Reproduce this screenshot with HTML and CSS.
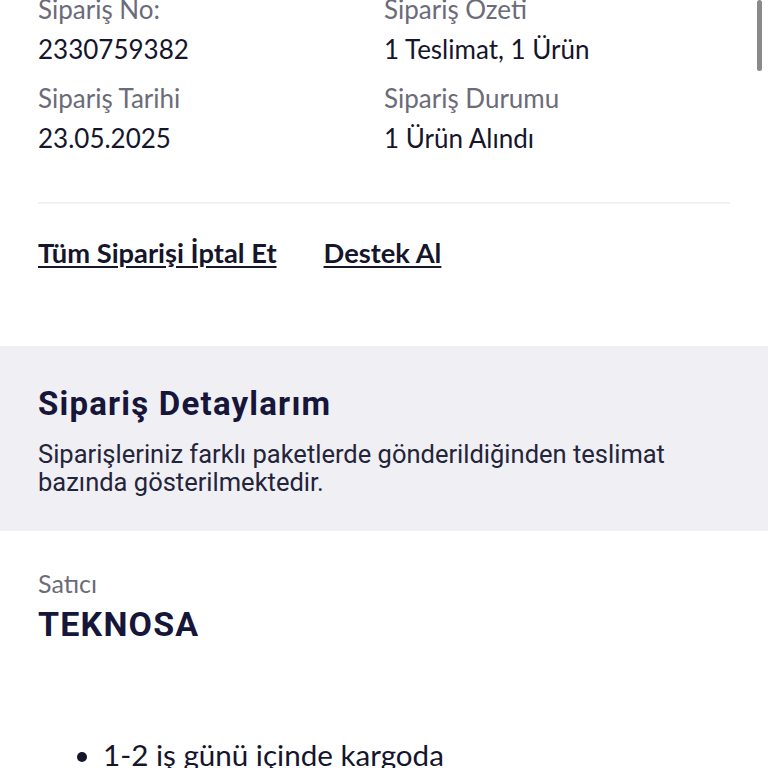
FILE: index.html
```html
<!DOCTYPE html>
<html lang="tr">
<head>
<meta charset="utf-8">
<link rel="stylesheet" href="styles.css">
</head>
<body>
<div class="page">
  <section class="info">
    <div class="field">
      <div class="label">Sipariş No:</div>
      <div class="value">2330759382</div>
    </div>
    <div class="field">
      <div class="label">Sipariş Özeti</div>
      <div class="value">1 Teslimat, 1 Ürün</div>
    </div>
    <div class="field">
      <div class="label">Sipariş Tarihi</div>
      <div class="value">23.05.2025</div>
    </div>
    <div class="field">
      <div class="label">Sipariş Durumu</div>
      <div class="value">1 Ürün Alındı</div>
    </div>
  </section>
  <hr class="divider">
  <nav class="actions">
    <a class="action" href="#">Tüm Siparişi İptal Et</a>
    <a class="action" href="#">Destek Al</a>
  </nav>
  <section class="details">
    <h2 class="details-title">Sipariş Detaylarım</h2>
    <p class="details-text">Siparişleriniz farklı paketlerde gönderildiğinden teslimat bazında gösterilmektedir.</p>
  </section>
  <section class="seller">
    <div class="seller-label">Satıcı</div>
    <div class="seller-name">TEKNOSA</div>
    <ul class="notes">
      <li>1-2 iş günü içinde kargoda</li>
    </ul>
  </section>
</div>
<div class="scrollbar"></div>
</body>
</html>
```
FILE: styles.css
```css
html, body {
  margin: 0;
  padding: 0;
  background: #ffffff;
}
body {
  font-family: Lato, "Open Sans", sans-serif;
  color: #15152b;
  overflow: hidden;
  height: 768px;
}
.page {
  margin-top: -10px;
}
.info {
  display: grid;
  grid-template-columns: 346px 1fr;
  padding: 0 38px;
  row-gap: 10px;
}
.label {
  font-size: 26px;
  line-height: 39px;
  color: #6b6b79;
}
.value {
  font-size: 26px;
  line-height: 40px;
  color: #15152b;
}
.divider {
  border: 0;
  border-top: 2px solid #f2f2f4;
  margin: 44px 38px 0;
}
.actions {
  display: flex;
  align-items: flex-start;
  gap: 47px;
  padding: 31px 38px 0;
  height: 142px;
  box-sizing: border-box;
}
.action {
  font-size: 27.3px;
  font-weight: 700;
  line-height: 36px;
  color: #15152b;
  text-decoration: underline;
  text-underline-offset: 3px;
  text-decoration-thickness: 2px;
}
.details {
  background: #f0f0f4;
  padding: 36px 38px 0;
  height: 185px;
  box-sizing: border-box;
}
.details-title {
  margin: 0;
  font-family: Roboto, sans-serif;
  font-weight: 700;
  font-size: 33px;
  letter-spacing: 1.2px;
  line-height: 44px;
  color: #16163a;
}
.details-text {
  margin: 14px 0 0;
  font-family: Roboto, sans-serif;
  font-size: 25.5px;
  line-height: 28px;
  color: #24243a;
}
.seller {
  padding: 35px 38px 0;
}
.seller-label {
  font-size: 25px;
  line-height: 34px;
  color: #6b6b79;
}
.seller-name {
  margin-top: 2px;
  font-family: Roboto, sans-serif;
  font-weight: 700;
  font-size: 34px;
  letter-spacing: 1.2px;
  line-height: 44px;
  color: #16163a;
}
.notes {
  margin: 91px 0 0;
  padding-left: 65px;
  font-size: 29.6px;
  line-height: 36px;
  color: #15152b;
}
.scrollbar {
  position: absolute;
  top: 0;
  right: 6px;
  width: 5px;
  height: 71px;
  border-radius: 3px;
  background: #8a8a8a;
}
```
